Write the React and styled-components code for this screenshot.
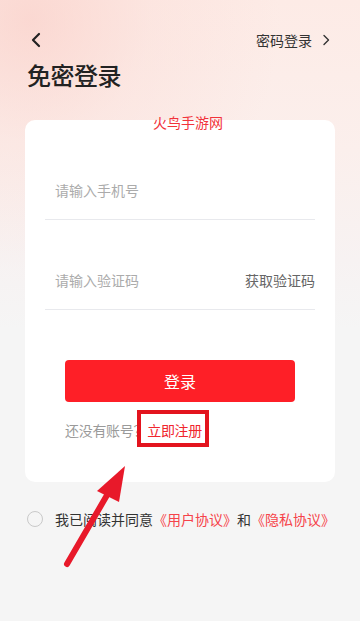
import React from "react";
import styled, { createGlobalStyle } from "styled-components";

const Global = createGlobalStyle`
  html, body { margin: 0; padding: 0; }
  body { font-family: "Noto Sans CJK SC", "Noto Sans", sans-serif; }
  * { box-sizing: border-box; }
`;

const Page = styled.div`
  position: relative;
  width: 360px;
  height: 621px;
  overflow: hidden;
  background:
    radial-gradient(circle at 30px 20px, rgba(250, 208, 201, 0.7) 0, rgba(251, 218, 212, 0.35) 120px, rgba(252, 230, 226, 0) 250px),
    linear-gradient(180deg, #fdebe6 0px, #fbefec 150px, #f7f2f2 260px, #f5f5f5 330px);
  display: flex;
  flex-direction: column;
`;

const TopBar = styled.div`
  margin-top: 28px;
  height: 24px;
  padding: 0 30px 0 30px;
  display: flex;
  align-items: center;
  justify-content: space-between;
`;

const IconBtn = styled.span`
  display: flex;
  align-items: center;
  color: #222;
`;

const SwitchLink = styled.span`
  display: flex;
  align-items: center;
  gap: 10px;
  font-size: 14px;
  color: #333;
  line-height: 20px;
`;

const Title = styled.h1`
  margin: 7px 0 0 27px;
  font-size: 24px;
  line-height: 32px;
  font-weight: 500;
  color: #222;
  letter-spacing: -0.5px;
`;

const Card = styled.div`
  margin: 29px 25px 0;
  background: #fff;
  border-radius: 10px;
  padding: 40px 20px 42px;
  display: flex;
  flex-direction: column;
`;

const Field = styled.div`
  height: 60px;
  margin-top: ${(p) => (p.$first ? 0 : 30)}px;
  padding-left: 10px;
  border-bottom: 1px solid #e8e9ed;
  display: flex;
  align-items: center;
  justify-content: space-between;
`;

const Input = styled.input`
  border: none;
  outline: none;
  background: transparent;
  flex: 1;
  min-width: 0;
  padding: 0;
  font-family: inherit;
  font-size: 14px;
  color: #333;
  &::placeholder { color: #ababab; }
`;

const CodeBtn = styled.span`
  font-size: 14px;
  color: #666;
  white-space: nowrap;
`;

const LoginBtn = styled.button`
  margin: 50px 20px 0;
  height: 42px;
  border: none;
  border-radius: 4px;
  background: #fe1f27;
  color: #fff;
  font-family: inherit;
  font-size: 16px;
`;

const RegisterLine = styled.div`
  margin: 18px 20px 0;
  line-height: 20px;
  font-size: 14px;
  color: #9a9a9a;
  letter-spacing: -0.3px;
`;

const RedText = styled.span`
  color: ${(p) => p.$color || "#f0252d"};
`;

const Agree = styled.div`
  margin: 27px 0 0 27px;
  display: flex;
  align-items: center;
  gap: 12px;
  line-height: 20px;
  font-size: 14px;
  color: #333;
  white-space: nowrap;
`;

const Radio = styled.span`
  width: 16px;
  height: 16px;
  border-radius: 50%;
  border: 1px solid #c9c9c9;
  flex: none;
`;

const Watermark = styled.div`
  position: absolute;
  left: 153px;
  top: 112px;
  font-size: 14px;
  line-height: 20px;
  color: #f2333b;
`;

const HighlightBox = styled.div`
  position: absolute;
  left: 137px;
  top: 410px;
  width: 72px;
  height: 37px;
  border: 4px solid #e3141e;
`;

const ArrowLayer = styled.svg`
  position: absolute;
  left: 0;
  top: 0;
  pointer-events: none;
`;

export default function App() {
  return (
    <Page>
      <Global />
      <TopBar>
        <IconBtn>
          <svg width="12" height="16" viewBox="0 0 12 16">
            <path d="M9 2 L3 8 L9 14" fill="none" stroke="#222" strokeWidth="2.2" strokeLinecap="round" strokeLinejoin="round" />
          </svg>
        </IconBtn>
        <SwitchLink>
          密码登录
          <svg width="8" height="12" viewBox="0 0 8 12">
            <path d="M2 1.5 L6.5 6 L2 10.5" fill="none" stroke="#333" strokeWidth="1.4" strokeLinecap="round" strokeLinejoin="round" />
          </svg>
        </SwitchLink>
      </TopBar>
      <Title>免密登录</Title>
      <Card>
        <Field $first>
          <Input placeholder="请输入手机号" />
        </Field>
        <Field>
          <Input placeholder="请输入验证码" />
          <CodeBtn>获取验证码</CodeBtn>
        </Field>
        <LoginBtn>登录</LoginBtn>
        <RegisterLine>
          还没有账号？<RedText>立即注册</RedText>
        </RegisterLine>
      </Card>
      <Agree>
        <Radio />
        <span>
          我已阅读并同意<RedText $color="#f5434a">《用户协议》</RedText>和<RedText $color="#f5434a">《隐私协议》</RedText>
        </span>
      </Agree>
      <Watermark>火鸟手游网</Watermark>
      <HighlightBox />
      <ArrowLayer width="360" height="621" viewBox="0 0 360 621">
        <line x1="67" y1="564" x2="110" y2="490" stroke="#e8192a" strokeWidth="6" strokeLinecap="round" />
        <polygon points="125,466 97,491 119,502" fill="#e8192a" />
      </ArrowLayer>
    </Page>
  );
}
